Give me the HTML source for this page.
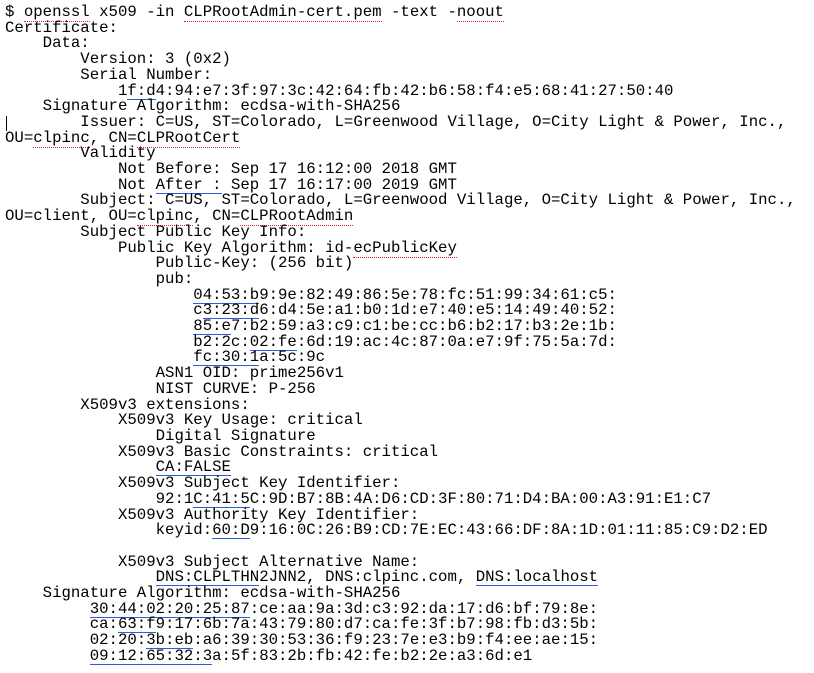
<!DOCTYPE html>
<html><head><meta charset="utf-8"><style>
html,body{margin:0;padding:0;background:#fff;}
body{width:814px;height:673px;overflow:hidden;position:relative;}
pre{margin:0;position:absolute;left:5px;top:5px;font-family:"Liberation Mono",monospace;font-size:15.7px;line-height:15.7px;color:#000;}
.r{border-bottom:1px dotted #e02020;}
.b{box-shadow:inset 0 -1px 0 #2a5fd8;}
.cur{position:absolute;left:6px;top:116px;width:1px;height:15px;background:#000;}
</style></head><body>
<div class="cur"></div>
<pre>$ <span class="r">openssl</span> x509 -in <span class="r">CLPRootAdmin-cert.pem</span> -text -<span class="r">noout</span>
Certificate:
    Data:
        Version: 3 (0x2)
        Serial Number:
            1<span class="b">f:d</span>4:94:e7:3f:97:3c:42:64:fb:42:b6:58:f4:e5:68:41:27:50:40
    Signature Algorithm: ecdsa-with-SHA256
        Issuer: C=US, ST=Colorado, L=Greenwood Village, O=City Light &amp; Power, Inc.,
OU=<span class="r">clpinc</span>, CN=<span class="r">CLPRootCert</span>
        Validity
            Not Before: Sep 17 16:12:00 2018 GMT
            Not <span class="b">After :</span> Sep 17 16:17:00 2019 GMT
        Subject: C=US, ST=Colorado, L=Greenwood Village, O=City Light &amp; Power, Inc.,
OU=client, OU=<span class="r">clpinc</span>, CN=<span class="r">CLPRootAdmin</span>
        Subject Public Key Info:
            Public Key Algorithm: id-<span class="r">ecPublicKey</span>
                Public-Key: (256 bit)
                pub:
                    <span class="b">04:53:b</span>9:9e:82:49:86:5e:78:fc:51:99:34:61:c5:
                    c<span class="b">3:23:d</span>6:d4:5e:a1:b0:1d:e7:40:e5:14:49:40:52:
                    <span class="b">85:e</span>7:b2:59:a3:c9:c1:be:cc:b6:b2:17:b3:2e:1b:
                    b2:2c:<span class="b">02:fe</span>:6d:19:ac:4c:87:0a:e7:9f:75:5a:7d:
                    <span class="b">fc:30:1</span>a:5c:9c
                ASN1 OID: prime256v1
                NIST CURVE: P-256
        X509v3 extensions:
            X509v3 Key Usage: critical
                Digital Signature
            X509v3 Basic Constraints: critical
                <span class="b">CA:FALSE</span>
            X509v3 Subject Key Identifier:
                92:1<span class="b">C:41:5</span>C:9D:B7:8B:4A:D6:CD:3F:80:71:D4:BA:00:A3:91:E1:C7
            X509v3 Authority Key Identifier:
                keyid:<span class="b">60:D</span>9:16:0C:26:B9:CD:7E:EC:43:66:DF:8A:1D:01:11:85:C9:D2:ED

            X509v3 Subject Alternative Name:
                <span class="b">DNS:CLPLTHN</span>2JNN2, DNS:clpinc.com, <span class="b">DNS:localhost</span>
    Signature Algorithm: ecdsa-with-SHA256
         <span class="b">30:44:02:20:25:87</span>:ce:aa:9a:3d:c3:92:da:17:d6:bf:79:8e:
         ca:<span class="b">63:f</span>9:17:6b:7a:43:79:80:d7:ca:fe:3f:b7:98:fb:d3:5b:
         02:20:<span class="b">3b:eb</span>:a6:39:30:53:36:f9:23:7e:e3:b9:f4:ee:ae:15:
         <span class="b">09:12:65:32:3</span>a:5f:83:2b:fb:42:fe:b2:2e:a3:6d:e1</pre>
</body></html>
